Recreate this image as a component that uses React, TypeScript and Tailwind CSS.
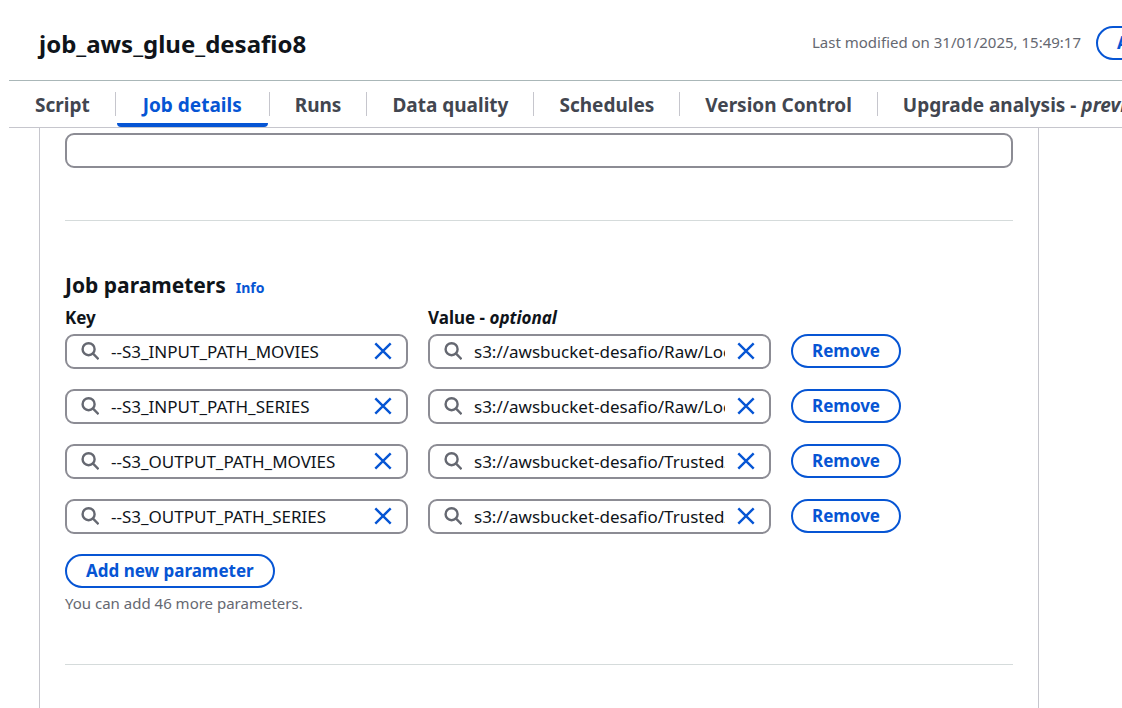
import { useState } from "react";

const tabs = ["Script", "Job details", "Runs", "Data quality", "Schedules", "Version Control"];

const initialRows = [
  { id: 1, key: "--S3_INPUT_PATH_MOVIES", value: "s3://awsbucket-desafio/Raw/Local/CSV/Movies/" },
  { id: 2, key: "--S3_INPUT_PATH_SERIES", value: "s3://awsbucket-desafio/Raw/Local/CSV/Series/" },
  { id: 3, key: "--S3_OUTPUT_PATH_MOVIES", value: "s3://awsbucket-desafio/Trusted/Local/Movies/" },
  { id: 4, key: "--S3_OUTPUT_PATH_SERIES", value: "s3://awsbucket-desafio/Trusted/Local/Series/" },
];

function SearchIcon() {
  return (
    <svg viewBox="0 0 18 18" className="mb-0.5 h-[18px] w-[18px] shrink-0" fill="none" stroke="#656871" strokeWidth="2.4" aria-hidden="true">
      <circle cx="7.6" cy="7.2" r="6" />
      <path d="M11.8 11.4 17.6 17.2" />
    </svg>
  );
}

function ClearIcon() {
  return (
    <svg viewBox="0 0 18 18" className="h-[18px] w-[18px]" fill="none" stroke="#0655d4" strokeWidth="2.4" aria-hidden="true">
      <path d="M1.3 1.3 16.7 16.7M16.7 1.3 1.3 16.7" />
    </svg>
  );
}

function SearchField({ label, value, onChange }: { label: string; value: string; onChange: (v: string) => void }) {
  return (
    <div className="col-span-3 flex h-[35px] items-center rounded-[9px] border-2 border-[#8c8c94] px-3.5">
      <SearchIcon />
      <input
        aria-label={label}
        value={value}
        onChange={(e) => onChange(e.target.value)}
        className="ml-3 min-w-0 flex-1 bg-transparent text-[17px] leading-6 text-[#0f141a] outline-none"
      />
      <button type="button" aria-label={`Clear ${label}`} onClick={() => onChange("")} className="mb-0.5 ml-3 shrink-0">
        <ClearIcon />
      </button>
    </div>
  );
}

const pill =
  "h-[34px] rounded-full border-2 border-[#0655d4] px-[19px] text-[17px] leading-6 font-bold whitespace-nowrap text-[#0655d4]";

export default function App() {
  const [rows, setRows] = useState(initialRows);
  const [active, setActive] = useState("Job details");

  const update = (id: number, field: "key" | "value", text: string) =>
    setRows(rows.map((r) => (r.id === id ? { ...r, [field]: text } : r)));

  return (
    <div className="flex min-h-screen flex-col overflow-hidden bg-white pl-[9px] font-['Noto_Sans',sans-serif] text-[#0f141a]">
      <header className="flex h-20 items-center pt-1.5">
        <div className="flex min-w-0 flex-1 items-center justify-between pr-[15px] pl-[30px] whitespace-nowrap">
          <h1 className="pt-0.5 text-2xl leading-7 font-bold">job_aws_glue_desafio8</h1>
          <p className="pb-0.5 text-[15px] leading-5 text-[#656871]">Last modified on 31/01/2025, 15:49:17</p>
        </div>
        <div className="w-[26px] shrink-0">
          <button type="button" className={pill}>
            Actions
          </button>
        </div>
      </header>

      <nav className="flex h-12 items-center border-t border-b border-t-[#aab7b8] border-b-[#c6c6cd] pl-px text-[19px] leading-7 font-bold whitespace-nowrap text-[#424650]">
        {tabs.map((tab) => (
          <div key={tab} className="flex h-full shrink-0 items-center">
            <button
              type="button"
              onClick={() => setActive(tab)}
              className={
                tab === active
                  ? "mx-px flex h-full items-center rounded-sm border-t-4 border-b-4 border-t-transparent border-b-[#0655d4] px-[26px] pt-0.5 text-[#0655d4]"
                  : "flex h-full items-center px-[25px] pt-0.5"
              }
            >
              {tab}
            </button>
            <span className="h-6 w-px bg-[#c6c6cd]" />
          </div>
        ))}
        <button type="button" className="h-full shrink-0 px-[25px] pt-0.5">
          Upgrade analysis - <i>preview</i>
        </button>
      </nav>

      <main className="mr-4 ml-[30px] flex max-w-[1000px] flex-1 flex-col border-x border-[#c6c6cd] px-[25px] pt-[5px]">
        <input aria-label="Path" className="h-[35px] w-full rounded-[9px] border-2 border-[#8c8c94] px-3 outline-none" />
        <hr className="mt-[52px] border-[#d5dbdb]" />

        <section className="pt-[50px]">
          <div className="flex items-baseline gap-2.5">
            <h2 className="text-[21px] leading-7 font-bold">Job parameters</h2>
            <a href="#info" className="text-sm leading-5 font-bold text-[#0655d4]">
              Info
            </a>
          </div>
          <div className="mt-[7px] grid grid-cols-8 gap-x-5 text-[17px] leading-6 font-bold">
            <span className="col-span-3">Key</span>
            <span className="col-span-3">
              Value - <i>optional</i>
            </span>
          </div>
          <div className="mt-1 flex flex-col gap-5">
            {rows.map((row) => (
              <div key={row.id} className="grid grid-cols-8 gap-x-5">
                <SearchField label="Key" value={row.key} onChange={(v) => update(row.id, "key", v)} />
                <SearchField label="Value" value={row.value} onChange={(v) => update(row.id, "value", v)} />
                <div className="col-span-2">
                  <button type="button" className={pill} onClick={() => setRows(rows.filter((r) => r.id !== row.id))}>
                    Remove
                  </button>
                </div>
              </div>
            ))}
          </div>
          <button
            type="button"
            className={`${pill} mt-5`}
            onClick={() => setRows([...rows, { id: Date.now(), key: "", value: "" }])}
          >
            Add new parameter
          </button>
          <p className="mt-[5px] text-[15px] leading-5 text-[#656871]">You can add {50 - rows.length} more parameters.</p>
        </section>
        <hr className="mt-[51px] border-[#d5dbdb]" />
      </main>
    </div>
  );
}
